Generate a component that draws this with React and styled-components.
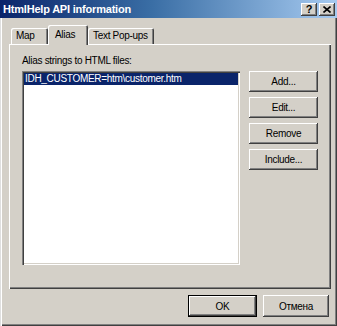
import styled, { createGlobalStyle } from 'styled-components'

const GlobalStyles = createGlobalStyle`
  html, body {
    margin: 0;
    padding: 0;
    background: #d4d0c8;
  }
  * {
    box-sizing: border-box;
  }
`

const Window = styled.div`
  width: 337px;
  height: 326px;
  background: #d4d0c8;
  display: flex;
  flex-direction: column;
  font-family: 'Liberation Sans', Arial, sans-serif;
  font-size: 10px;
  letter-spacing: -0.3px;
  color: #000;
  box-shadow: inset 1px 0 #dfdfdf, inset 2px 0 #fff, inset -1px -1px #404040,
    inset -2px -2px #808080;
`

const TitleBar = styled.div`
  height: 18px;
  display: flex;
  align-items: center;
  padding: 0 2px 0 3px;
  background: linear-gradient(to right, #0a246a 0%, #3a6ea5 45%, #a6caf0 100%);
`

const Title = styled.div`
  flex: 1;
  color: #fff;
  font-weight: bold;
  font-size: 11px;
  letter-spacing: -0.2px;
`

const CaptionButton = styled.div`
  width: 16px;
  height: 13px;
  margin-left: ${(p) => (p.$gap ? '2px' : '0')};
  background: #d4d0c8;
  display: flex;
  align-items: center;
  justify-content: center;
  font-weight: bold;
  font-size: 11px;
  letter-spacing: 0;
  box-shadow: inset -1px -1px #404040, inset 1px 1px #fff, inset -2px -2px #808080;
`

const Body = styled.div`
  flex: 1;
  display: flex;
  flex-direction: column;
  padding: 6px 6px 0 9px;
`

const TabRow = styled.div`
  display: flex;
  align-items: flex-end;
  height: 20px;
  padding-left: 2px;
  position: relative;
  z-index: 1;
`

const Tab = styled.div`
  width: ${(p) => p.$w}px;
  height: ${(p) => (p.$active ? 20 : 16)}px;
  margin-bottom: ${(p) => (p.$active ? '-1px' : '0')};
  padding-top: ${(p) => (p.$active ? 4 : 2)}px;
  padding-left: ${(p) => (p.$active ? 7 : 5)}px;
  background: #d4d0c8;
  white-space: nowrap;
  border-top-left-radius: 2px;
  border-top-right-radius: 2px;
  box-shadow: inset 1px 1px #fff, inset -1px 0 #404040, inset -2px 0 #808080;
`

const Panel = styled.div`
  height: 245px;
  padding: 11px 0 0 13px;
  box-shadow: inset 1px 1px #fff, inset -1px -1px #404040, inset -2px -2px #808080;
`

const Label = styled.div`
  height: 12px;
  line-height: 12px;
  margin-bottom: 4px;
`

const Content = styled.div`
  display: flex;
  gap: 9px;
`

const ListBox = styled.div`
  width: 218px;
  height: 194px;
  background: #fff;
  padding: 2px;
  box-shadow: inset 1px 1px #808080, inset 2px 2px #404040, inset -1px -1px #fff,
    inset -2px -2px #d4d0c8;
`

const ListItem = styled.div`
  height: 12px;
  line-height: 12px;
  padding-left: 1px;
  background: ${(p) => (p.$selected ? '#0a246a' : 'transparent')};
  color: ${(p) => (p.$selected ? '#fff' : '#000')};
  white-space: nowrap;
`

const ButtonColumn = styled.div`
  display: flex;
  flex-direction: column;
  gap: 5px;
`

const Button = styled.div`
  width: ${(p) => p.$w || 69}px;
  height: ${(p) => p.$h || 21}px;
  display: flex;
  align-items: center;
  justify-content: center;
  background: #d4d0c8;
  box-shadow: ${(p) =>
    p.$default
      ? 'inset 0 0 0 1px #000, inset -2px -2px #404040, inset 2px 2px #fff, inset -3px -3px #808080'
      : 'inset -1px -1px #404040, inset 1px 1px #fff, inset -2px -2px #808080'};
`

const Footer = styled.div`
  display: flex;
  justify-content: flex-end;
  gap: 6px;
  padding: 6px 2px 0 0;
`

function App() {
  return (
    <>
      <GlobalStyles />
      <Window>
        <TitleBar>
          <Title>HtmlHelp API information</Title>
          <CaptionButton>?</CaptionButton>
          <CaptionButton $gap>
            <svg width="8" height="7" viewBox="0 0 8 7">
              <path d="M0.5 0.5 L7.5 6.5 M7.5 0.5 L0.5 6.5" stroke="#000" strokeWidth="1.6" />
            </svg>
          </CaptionButton>
        </TitleBar>
        <Body>
          <TabRow>
            <Tab $w={37}>Map</Tab>
            <Tab $w={40} $active>
              Alias
            </Tab>
            <Tab $w={66}>Text Pop-ups</Tab>
          </TabRow>
          <Panel>
            <Label>Alias strings to HTML files:</Label>
            <Content>
              <ListBox>
                <ListItem $selected>IDH_CUSTOMER=htm\customer.htm</ListItem>
              </ListBox>
              <ButtonColumn>
                <Button>Add...</Button>
                <Button>Edit...</Button>
                <Button>Remove</Button>
                <Button>Include...</Button>
              </ButtonColumn>
            </Content>
          </Panel>
          <Footer>
            <Button $default $h={22}>
              OK
            </Button>
            <Button $w={66} $h={22}>
              Отмена
            </Button>
          </Footer>
        </Body>
      </Window>
    </>
  )
}

export default App
